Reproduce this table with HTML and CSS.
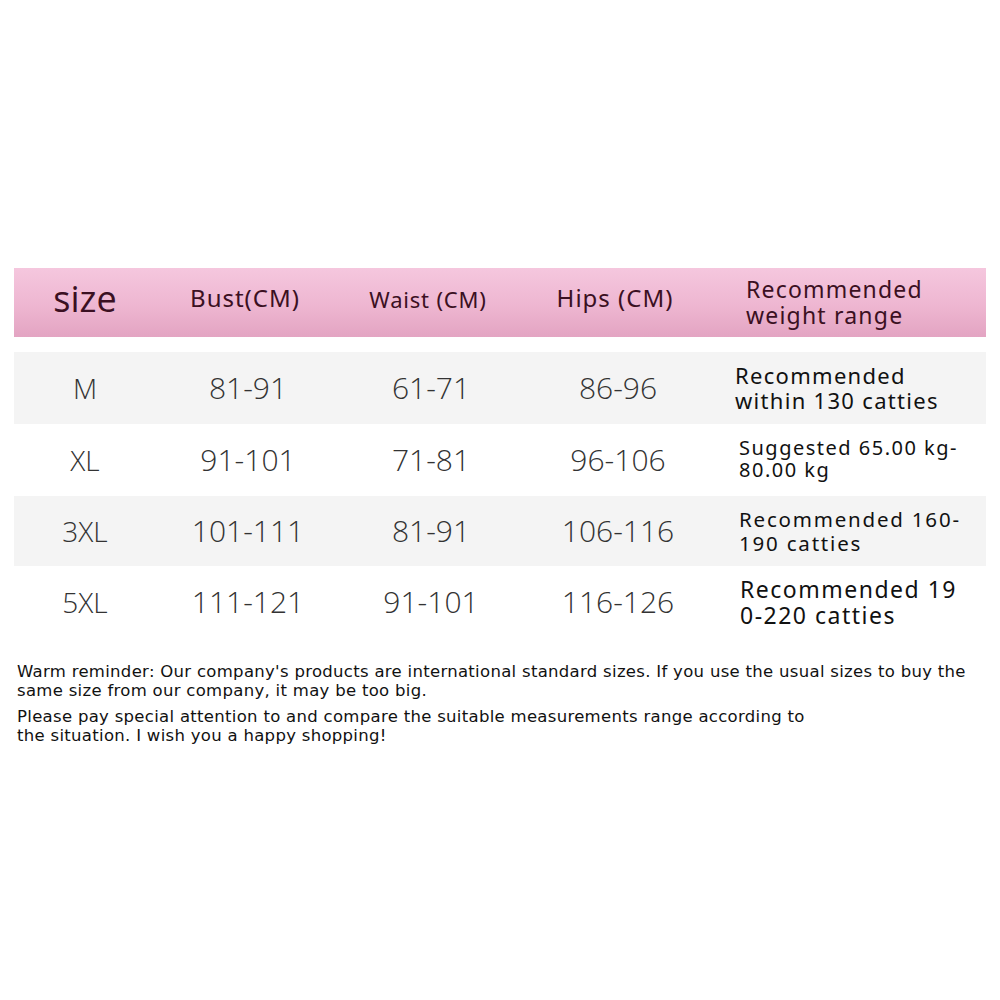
FILE: index.html
```html
<!DOCTYPE html>
<html>
<head>
<meta charset="utf-8">
<link rel="stylesheet" href="styles.css">
</head>
<body>
<div class="page">
  <div class="table">
    <div class="row head">
      <div class="cell c1"><span class="h-size">size</span></div>
      <div class="cell c2"><span class="h-txt">Bust(CM)</span></div>
      <div class="cell c3"><span class="h-txt h-waist">Waist (CM)</span></div>
      <div class="cell c4"><span class="h-txt">Hips (CM)</span></div>
      <div class="cell c5"><span class="h-rec">Recommended<br>weight range</span></div>
    </div>
    <div class="gap"></div>
    <div class="row grey">
      <div class="cell c1"><span class="sz">M</span></div>
      <div class="cell c2"><span class="num">81-91</span></div>
      <div class="cell c3"><span class="num">61-71</span></div>
      <div class="cell c4"><span class="num">86-96</span></div>
      <div class="cell c5"><span class="w w1">Recommended<br>within 130 catties</span></div>
    </div>
    <div class="row">
      <div class="cell c1"><span class="sz">XL</span></div>
      <div class="cell c2"><span class="num">91-101</span></div>
      <div class="cell c3"><span class="num">71-81</span></div>
      <div class="cell c4"><span class="num">96-106</span></div>
      <div class="cell c5"><span class="w w2">Suggested 65.00 kg-<br>80.00 kg</span></div>
    </div>
    <div class="row grey short">
      <div class="cell c1"><span class="sz">3XL</span></div>
      <div class="cell c2"><span class="num">101-111</span></div>
      <div class="cell c3"><span class="num">81-91</span></div>
      <div class="cell c4"><span class="num">106-116</span></div>
      <div class="cell c5"><span class="w w3">Recommended 160-<br>190 catties</span></div>
    </div>
    <div class="row">
      <div class="cell c1"><span class="sz">5XL</span></div>
      <div class="cell c2"><span class="num">111-121</span></div>
      <div class="cell c3"><span class="num">91-101</span></div>
      <div class="cell c4"><span class="num">116-126</span></div>
      <div class="cell c5"><span class="w w4">Recommended 19<br>0-220 catties</span></div>
    </div>
  </div>
  <div class="notes">
    <p>Warm reminder: Our company's products are international standard sizes. If you use the usual sizes to buy the<br>same size from our company, it may be too big.</p>
    <p>Please pay special attention to and compare the suitable measurements range according to<br>the situation. I wish you a happy shopping!</p>
  </div>
</div>
</body>
</html>
```

FILE: styles.css
```css
html, body {
  margin: 0;
  padding: 0;
  background: #ffffff;
}
.page {
  width: 1000px;
  height: 1000px;
  padding-top: 268px;
  box-sizing: border-box;
  font-family: "Noto Sans", "Open Sans", sans-serif;
}
.table {
  margin: 0 14px;
  display: flex;
  flex-direction: column;
}
.row {
  display: grid;
  grid-template-columns: 142px 178px 188px 186px 1fr;
  height: 72px;
  align-items: center;
}
.row.short {
  height: 70px;
}
.row.head {
  height: 69px;
  background: linear-gradient(180deg, #f5c7de 0%, #eeb6d1 55%, #e3a4c2 100%);
  color: #3b1022;
}
.gap {
  height: 15px;
}
.grey {
  background: #f4f4f4;
}
.cell {
  display: flex;
  align-items: center;
  justify-content: center;
}
.c5 {
  justify-content: flex-start;
}
.h-size {
  font-family: "Open Sans", "Noto Sans", sans-serif;
  font-size: 36px;
  font-weight: 500;
  line-height: 1;
  margin-top: -8px;
}
.h-txt {
  font-size: 24px;
  letter-spacing: 1px;
  line-height: 1;
  margin-top: -10px;
}
.h-waist {
  font-size: 22px;
  letter-spacing: 0.8px;
  margin-top: -8px;
}
.h-rec {
  font-size: 23px;
  letter-spacing: 1.2px;
  line-height: 26px;
  margin-left: 38px;
  margin-top: -2px;
}
.sz, .num {
  font-family: "Open Sans", sans-serif;
  font-weight: 300;
  font-size: 30px;
  color: #333333;
  line-height: 1;
}
.num {
  margin-left: 6px;
}
.sz {
  font-size: 28px;
}
.w {
  color: #111111;
  font-family: "Noto Sans", sans-serif;
}
.w1 {
  font-size: 22px;
  letter-spacing: 1.3px;
  line-height: 25px;
  margin-left: 27px;
}
.w2 {
  font-size: 20px;
  letter-spacing: 1.5px;
  line-height: 22px;
  margin-left: 31px;
  margin-top: -2px;
}
.w3 {
  font-size: 20.5px;
  letter-spacing: 1.8px;
  line-height: 24px;
  margin-left: 31px;
}
.w4 {
  font-size: 23px;
  letter-spacing: 1.5px;
  line-height: 26px;
  margin-left: 32px;
}
.notes {
  margin: 24px 0 0 17px;
  font-size: 16.5px;
  letter-spacing: 0.3px;
  color: #111111;
  font-family: "DejaVu Sans", sans-serif;
}
.notes p {
  margin: 0 0 7px 0;
  line-height: 19px;
}
```
